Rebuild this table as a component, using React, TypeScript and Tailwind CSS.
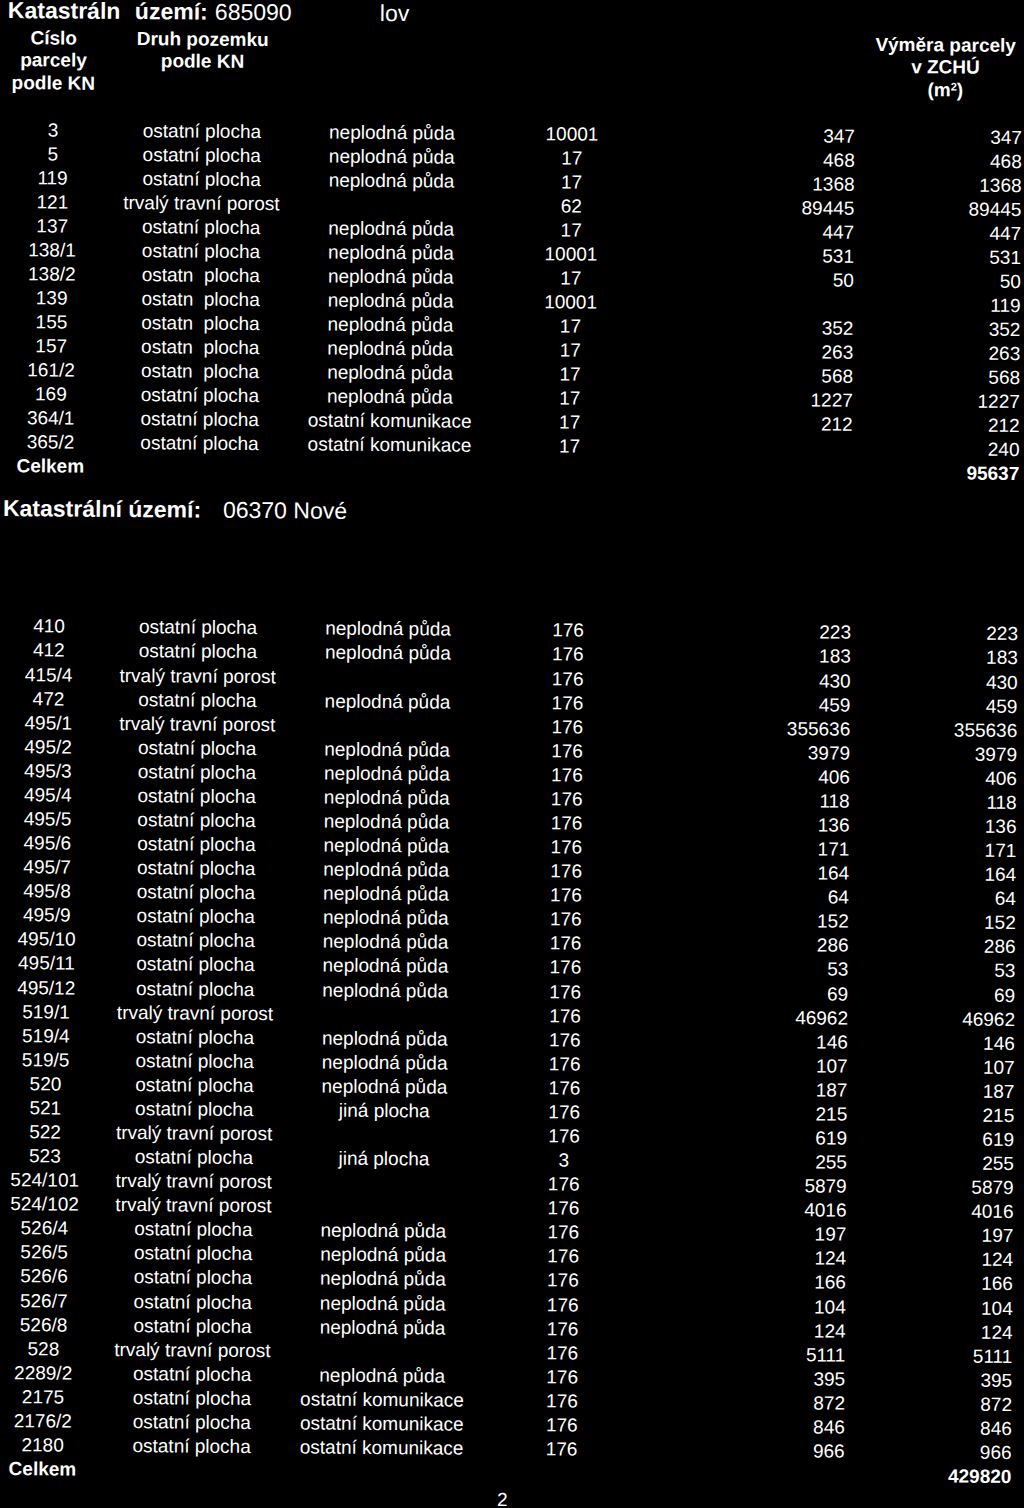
import React from 'react';

type Row = {
    id: string;
    druh: string;
    vyuziti?: string;
    kod: string;
    vymera?: string;
    zchu: string;
};

const O = 'ostatní plocha';
const OX = 'ostatn  plocha'; // scan lost the í here
const T = 'trvalý travní porost';
const N = 'neplodná půda';
const K = 'ostatní komunikace';
const J = 'jiná plocha';

const firstRows: Row[] = [
    { id: '3', druh: O, vyuziti: N, kod: '10001', vymera: '347', zchu: '347' },
    { id: '5', druh: O, vyuziti: N, kod: '17', vymera: '468', zchu: '468' },
    { id: '119', druh: O, vyuziti: N, kod: '17', vymera: '1368', zchu: '1368' },
    { id: '121', druh: T, kod: '62', vymera: '89445', zchu: '89445' },
    { id: '137', druh: O, vyuziti: N, kod: '17', vymera: '447', zchu: '447' },
    { id: '138/1', druh: O, vyuziti: N, kod: '10001', vymera: '531', zchu: '531' },
    { id: '138/2', druh: OX, vyuziti: N, kod: '17', vymera: '50', zchu: '50' },
    { id: '139', druh: OX, vyuziti: N, kod: '10001', zchu: '119' },
    { id: '155', druh: OX, vyuziti: N, kod: '17', vymera: '352', zchu: '352' },
    { id: '157', druh: OX, vyuziti: N, kod: '17', vymera: '263', zchu: '263' },
    { id: '161/2', druh: OX, vyuziti: N, kod: '17', vymera: '568', zchu: '568' },
    { id: '169', druh: O, vyuziti: N, kod: '17', vymera: '1227', zchu: '1227' },
    { id: '364/1', druh: O, vyuziti: K, kod: '17', vymera: '212', zchu: '212' },
    { id: '365/2', druh: O, vyuziti: K, kod: '17', zchu: '240' },
];

const secondRows: Row[] = [
    { id: '410', druh: O, vyuziti: N, kod: '176', vymera: '223', zchu: '223' },
    { id: '412', druh: O, vyuziti: N, kod: '176', vymera: '183', zchu: '183' },
    { id: '415/4', druh: T, kod: '176', vymera: '430', zchu: '430' },
    { id: '472', druh: O, vyuziti: N, kod: '176', vymera: '459', zchu: '459' },
    { id: '495/1', druh: T, kod: '176', vymera: '355636', zchu: '355636' },
    { id: '495/2', druh: O, vyuziti: N, kod: '176', vymera: '3979', zchu: '3979' },
    { id: '495/3', druh: O, vyuziti: N, kod: '176', vymera: '406', zchu: '406' },
    { id: '495/4', druh: O, vyuziti: N, kod: '176', vymera: '118', zchu: '118' },
    { id: '495/5', druh: O, vyuziti: N, kod: '176', vymera: '136', zchu: '136' },
    { id: '495/6', druh: O, vyuziti: N, kod: '176', vymera: '171', zchu: '171' },
    { id: '495/7', druh: O, vyuziti: N, kod: '176', vymera: '164', zchu: '164' },
    { id: '495/8', druh: O, vyuziti: N, kod: '176', vymera: '64', zchu: '64' },
    { id: '495/9', druh: O, vyuziti: N, kod: '176', vymera: '152', zchu: '152' },
    { id: '495/10', druh: O, vyuziti: N, kod: '176', vymera: '286', zchu: '286' },
    { id: '495/11', druh: O, vyuziti: N, kod: '176', vymera: '53', zchu: '53' },
    { id: '495/12', druh: O, vyuziti: N, kod: '176', vymera: '69', zchu: '69' },
    { id: '519/1', druh: T, kod: '176', vymera: '46962', zchu: '46962' },
    { id: '519/4', druh: O, vyuziti: N, kod: '176', vymera: '146', zchu: '146' },
    { id: '519/5', druh: O, vyuziti: N, kod: '176', vymera: '107', zchu: '107' },
    { id: '520', druh: O, vyuziti: N, kod: '176', vymera: '187', zchu: '187' },
    { id: '521', druh: O, vyuziti: J, kod: '176', vymera: '215', zchu: '215' },
    { id: '522', druh: T, kod: '176', vymera: '619', zchu: '619' },
    { id: '523', druh: O, vyuziti: J, kod: '3', vymera: '255', zchu: '255' },
    { id: '524/101', druh: T, kod: '176', vymera: '5879', zchu: '5879' },
    { id: '524/102', druh: T, kod: '176', vymera: '4016', zchu: '4016' },
    { id: '526/4', druh: O, vyuziti: N, kod: '176', vymera: '197', zchu: '197' },
    { id: '526/5', druh: O, vyuziti: N, kod: '176', vymera: '124', zchu: '124' },
    { id: '526/6', druh: O, vyuziti: N, kod: '176', vymera: '166', zchu: '166' },
    { id: '526/7', druh: O, vyuziti: N, kod: '176', vymera: '104', zchu: '104' },
    { id: '526/8', druh: O, vyuziti: N, kod: '176', vymera: '124', zchu: '124' },
    { id: '528', druh: T, kod: '176', vymera: '5111', zchu: '5111' },
    { id: '2289/2', druh: O, vyuziti: N, kod: '176', vymera: '395', zchu: '395' },
    { id: '2175', druh: O, vyuziti: K, kod: '176', vymera: '872', zchu: '872' },
    { id: '2176/2', druh: O, vyuziti: K, kod: '176', vymera: '846', zchu: '846' },
    { id: '2180', druh: O, vyuziti: K, kod: '176', vymera: '966', zchu: '966' },
];

const DataRow: React.FC<{ row: Row; tall?: boolean }> = ({ row, tall }) => (
    <div className={`grid grid-cols-[108px_190px_190px_170px_198px_167px] ${tall ? 'h-[24.08px] leading-[24.08px]' : 'h-[24px] leading-[24px]'}`}>
        <div className="text-center">{row.id}</div>
        <div className="text-center whitespace-pre">{row.druh}</div>
        <div className="text-center">{row.vyuziti}</div>
        <div className="text-center">{row.kod}</div>
        <div className="text-right">{row.vymera}</div>
        <div className="text-right">{row.zchu}</div>
    </div>
);

const TotalRow: React.FC<{ total: string; tall?: boolean }> = ({ total, tall }) => (
    <div className={`grid grid-cols-[108px_190px_190px_170px_198px_167px] font-bold ${tall ? 'h-[24.08px] leading-[24.08px]' : 'h-[24px] leading-[24px]'}`}>
        <div className="text-center">Celkem</div>
        <div />
        <div />
        <div />
        <div />
        <div className="text-right">{total}</div>
    </div>
);

export default function App() {
    return (
        <div className="w-[1024px] h-[1508px] overflow-hidden bg-black text-white font-['Liberation_Sans',Arial,sans-serif] text-[19px]">
            {/* scan is tilted a little clockwise */}
            <div className="origin-top-left rotate-[0.45deg]">
                {/* Katastrální území 1 */}
                <div className="flex h-[20px] leading-[20px] text-[23px] whitespace-nowrap">
                    <span className="w-[135px] pl-[8px] font-bold">Katastráln</span>
                    <span className="w-[80px] font-bold">území:</span>
                    <span className="w-[165px]">685090</span>
                    <span>lov</span>
                </div>

                {/* column headers */}
                <div className="flex mt-[6.7px] font-bold leading-[22.5px] h-[67.5px]">
                    <div className="w-[108px] text-center">
                        <div>Císlo</div>
                        <div>parcely</div>
                        <div>podle KN</div>
                    </div>
                    <div className="w-[190px] text-center">
                        <div>Druh pozemku</div>
                        <div>podle KN</div>
                    </div>
                    <div className="flex-1" />
                    <div className="w-[154px] text-center">
                        <div>Výměra parcely</div>
                        <div>v ZCHÚ</div>
                        <div>
                            (m<sup className="text-[11px]">2</sup>)
                        </div>
                    </div>
                    <div className="w-[1px]" />
                </div>

                <div className="mt-[23.5px]">
                    {firstRows.map(r => (
                        <DataRow key={r.id} row={r} />
                    ))}
                    <TotalRow total="95637" />
                </div>

                {/* Katastrální území 2 */}
                <div className="flex mt-[20.3px] h-[20px] leading-[20px] text-[23px] whitespace-nowrap">
                    <span className="w-[227px] pl-[7px] font-bold">Katastrální území:</span>
                    <span>06370 Nové</span>
                </div>

                <div className="mt-[96.4px]">
                    {secondRows.map(r => (
                        <DataRow key={r.id} row={r} tall />
                    ))}
                    <TotalRow total="429820" tall />
                </div>

                <div className="mt-[3px] h-[24px] leading-[24px] text-center pl-[4px]">2</div>
            </div>
        </div>
    );
}
